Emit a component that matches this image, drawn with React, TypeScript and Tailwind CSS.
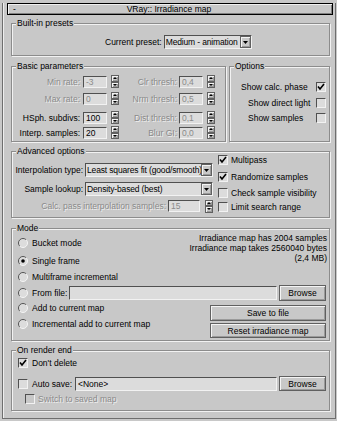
import type { ReactNode } from "react";

const SUNKEN = "border border-t-[#505050] border-l-[#505050] border-b-[#f2f2f2] border-r-[#f2f2f2]";
const RAISED = "border border-[#606060] shadow-[inset_1px_1px_0_#f4f4f4,inset_-1px_-1px_0_#9a9a9a]";
const DIM = "text-[#8a8a8a] [text-shadow:1px_1px_0_#eeeeee]";

function Group({ label, className, children }: { label: string; className: string; children?: ReactNode }) {
    return (
        <div className={"relative border border-[#8c8c8c] shadow-[inset_1px_1px_0_#f2f2f2,1px_1px_0_#f2f2f2] " + className}>
            <span className="absolute -top-[6px] left-[4px] bg-[#c8c8c8] px-[1px] leading-[11px]">{label}</span>
            {children}
        </div>
    );
}

function Check({ on, off }: { on?: boolean; off?: boolean }) {
    return (
        <span className={"flex h-[10px] w-[10px] shrink-0 items-center justify-center " + SUNKEN + (off ? " bg-[#c8c8c8]" : " bg-[#dcdcdc]")}>
            {on && (
                <svg width="8" height="8" viewBox="0 0 8 8">
                    <path d="M1 3.5 L3 6 L7 1" stroke="#000" strokeWidth="1.6" fill="none" />
                </svg>
            )}
        </span>
    );
}

function Radio({ on }: { on?: boolean }) {
    return (
        <svg width="10" height="10" viewBox="0 0 10 10" className="shrink-0">
            <circle cx="5" cy="5" r="4.5" fill="#dcdcdc" />
            <path d="M8.2 1.8 A4.5 4.5 0 0 0 1.8 8.2" stroke="#555" fill="none" />
            <path d="M1.8 8.2 A4.5 4.5 0 0 0 8.2 1.8" stroke="#f4f4f4" fill="none" />
            {on && <circle cx="5" cy="5" r="1.8" fill="#000" />}
        </svg>
    );
}

function Spin() {
    return (
        <span className="flex h-[13px] w-[8px] shrink-0 flex-col">
            <span className={"flex flex-1 items-center justify-center " + RAISED}>
                <svg width="4" height="2" viewBox="0 0 4 2"><path d="M0 2 L2 0 L4 2 Z" fill="#000" /></svg>
            </span>
            <span className={"flex flex-1 items-center justify-center " + RAISED}>
                <svg width="4" height="2" viewBox="0 0 4 2"><path d="M0 0 L2 2 L4 0 Z" fill="#000" /></svg>
            </span>
        </span>
    );
}

function Field({ value, dim, className }: { value: string; dim?: boolean; className: string }) {
    return (
        <span className={"flex items-center bg-[#dcdcdc] pl-[2px] " + SUNKEN + " " + className + (dim ? " text-[#8a8a8a]" : "")}>
            {value}
        </span>
    );
}

function Drop({ value, className }: { value: string; className: string }) {
    return (
        <span className={"flex h-[14px] items-center bg-[#dcdcdc] " + SUNKEN + " " + className}>
            <span className="flex-1 overflow-hidden whitespace-nowrap pl-[1px] tracking-[-0.15px]">{value}</span>
            <span className={"flex h-[12px] w-[11px] shrink-0 items-center justify-center bg-[#c8c8c8] " + RAISED}>
                <svg width="5" height="3" viewBox="0 0 5 3"><path d="M0 0 L2.5 3 L5 0 Z" fill="#000" /></svg>
            </span>
        </span>
    );
}

function Btn({ text, className }: { text: string; className: string }) {
    return <span className={"flex items-center justify-center bg-[#c8c8c8] " + RAISED + " " + className}>{text}</span>;
}

const BASIC = [
    { a: "Min rate:", av: "-3", ad: true, b: "Clr thresh:", bv: "0,4", mt: "" },
    { a: "Max rate:", av: "0", ad: true, b: "Nrm thresh:", bv: "0,5", mt: "mt-[4px]" },
    { a: "HSph. subdivs:", av: "100", ad: false, b: "Dist thresh:", bv: "0,1", mt: "mt-[6px]" },
    { a: "Interp. samples:", av: "20", ad: false, b: "Blur GI:", bv: "0,0", mt: "mt-[2px]" },
];

export default function App() {
    return (
        <div className="h-[421px] w-[337px] overflow-hidden bg-[#c8c8c8] font-['Liberation_Sans',Arial,sans-serif] text-[8.5px] leading-[10px] text-black">
            <div className="ml-[2px] mr-[1px] h-[416px] border-x border-b border-[#6e6e6e] shadow-[inset_1px_0_0_#eeeeee]">
                {/* rollout title */}
                <div className="relative ml-[4px] mr-[2px] mt-[3px] flex h-[12px] items-center border border-black bg-[#c8c8c8] shadow-[inset_1px_1px_0_#f0f0f0,inset_-1px_-1px_0_#808080]">
                    <span className="pl-[5px]">-</span>
                    <span className="flex-1 pr-[10px] text-center">VRay:: Irradiance map</span>
                </div>

                <div className="ml-[8px] mr-[5px] flex flex-col">
                    <Group label="Built-in presets" className="mt-[8px] h-[33px]">
                        <div className="flex items-center pl-[93px] pt-[11px]">
                            <span>Current preset:</span>
                            <Drop value="Medium - animation" className="ml-[2px] w-[88px]" />
                        </div>
                    </Group>

                    <div className="mt-[10px] flex gap-[3px]">
                        <Group label="Basic parameters" className="h-[76px] w-[215px]">
                            <div className="flex flex-col pt-[8px]">
                                {BASIC.map((r) => (
                                    <div key={r.a} className={"flex h-[13px] items-center " + r.mt}>
                                        <span className={"w-[68px] text-right " + (r.ad ? DIM : "")}>{r.a}</span>
                                        <Field value={r.av} dim={r.ad} className="ml-[3px] h-[12px] w-[24px]" />
                                        <span className="ml-[4px]"><Spin /></span>
                                        <span className={"w-[58px] text-right " + DIM}>{r.b}</span>
                                        <Field value={r.bv} dim className="ml-[2px] h-[12px] w-[24px]" />
                                        <span className="ml-[4px]"><Spin /></span>
                                    </div>
                                ))}
                            </div>
                        </Group>
                        <Group label="Options" className="h-[76px] flex-1">
                            <div className="flex flex-col pr-[3px] pt-[15px]">
                                <div className="flex h-[10px] items-center">
                                    <span className="flex-1 pl-[11px]">Show calc. phase</span>
                                    <Check on />
                                </div>
                                <div className="mt-[6px] flex h-[10px] items-center">
                                    <span className="flex-1 pl-[18px]">Show direct light</span>
                                    <Check />
                                </div>
                                <div className="mt-[5px] flex h-[10px] items-center">
                                    <span className="flex-1 pl-[18px]">Show samples</span>
                                    <Check />
                                </div>
                            </div>
                        </Group>
                    </div>

                    <Group label="Advanced options" className="mt-[9px] flex h-[67px]">
                        <div className="flex w-[201px] flex-col pt-[11px]">
                            <div className="flex h-[14px] items-center">
                                <span className="w-[71px] text-right">Interpolation type:</span>
                                <Drop value="Least squares fit (good/smooth)" className="ml-[2px] w-[128px]" />
                            </div>
                            <div className="mt-[5px] flex h-[14px] items-center">
                                <span className="w-[71px] text-right">Sample lookup:</span>
                                <Drop value="Density-based (best)" className="ml-[2px] w-[128px]" />
                            </div>
                            <div className="mt-[4px] flex h-[12px] items-center">
                                <span className={"w-[154px] text-right " + DIM}>Calc. pass interpolation samples:</span>
                                <Field value="15" dim className="ml-[2px] h-[12px] w-[32px]" />
                                <span className="ml-[5px]"><Spin /></span>
                            </div>
                        </div>
                        <div className="flex flex-1 flex-col pl-[5px] pt-[3px]">
                            <div className="flex h-[10px] items-center gap-[3px]"><Check on /><span>Multipass</span></div>
                            <div className="mt-[7px] flex h-[10px] items-center gap-[3px]"><Check on /><span>Randomize samples</span></div>
                            <div className="mt-[6px] flex h-[10px] items-center gap-[3px]"><Check /><span>Check sample visibility</span></div>
                            <div className="mt-[4px] flex h-[10px] items-center gap-[3px]"><Check /><span>Limit search range</span></div>
                        </div>
                    </Group>

                    <Group label="Mode" className="mt-[10px] flex h-[113px] flex-col">
                        <div className="flex">
                            <div className="flex flex-col pl-[6px] pt-[9px]">
                                <div className="flex h-[10px] items-center gap-[4px]"><Radio /><span>Bucket mode</span></div>
                                <div className="mt-[8px] flex h-[10px] items-center gap-[4px]"><Radio on /><span>Single frame</span></div>
                                <div className="mt-[6px] flex h-[10px] items-center gap-[4px]"><Radio /><span>Multiframe incremental</span></div>
                            </div>
                            <div className="ml-auto flex flex-col items-end pr-[2px] pt-[4px] text-right">
                                <span>Irradiance map has 2004 samples</span>
                                <span>Irradiance map takes 2560040 bytes</span>
                                <span>(2,4 MB)</span>
                            </div>
                        </div>
                        <div className="mt-[3px] flex h-[16px] items-center pl-[6px] pr-[3px]">
                            <Radio />
                            <span className="ml-[4px] flex-1">From file:</span>
                            <Field value="" className="h-[14px] w-[208px]" />
                            <Btn text="Browse" className="ml-[2px] h-[16px] w-[47px]" />
                        </div>
                        <div className="flex">
                            <div className="flex flex-col pl-[6px] pt-[2px]">
                                <div className="flex h-[10px] items-center gap-[4px]"><Radio /><span>Add to current map</span></div>
                                <div className="mt-[6px] flex h-[10px] items-center gap-[4px]"><Radio /><span>Incremental add to current map</span></div>
                            </div>
                            <div className="ml-auto flex flex-col pr-[3px] pt-[4px]">
                                <Btn text="Save to file" className="h-[16px] w-[116px]" />
                                <Btn text="Reset irradiance map" className="mt-[2px] h-[15px] w-[116px]" />
                            </div>
                        </div>
                    </Group>

                    <Group label="On render end" className="mt-[9px] flex h-[61px] flex-col">
                        <div className="mt-[7px] flex h-[10px] items-center gap-[4px] pl-[6px]">
                            <Check on />
                            <span>Don't delete</span>
                        </div>
                        <div className="mt-[8px] flex h-[15px] items-center pl-[6px] pr-[3px]">
                            <Check />
                            <span className="ml-[4px] flex-1">Auto save:</span>
                            <Field value="<None>" className="h-[14px] w-[202px]" />
                            <Btn text="Browse" className="ml-[2px] h-[15px] w-[47px]" />
                        </div>
                        <div className="mt-[3px] flex h-[10px] items-center gap-[3px] pl-[13px]">
                            <Check off />
                            <span className={DIM}>Switch to saved map</span>
                        </div>
                    </Group>
                </div>
            </div>
        </div>
    );
}
